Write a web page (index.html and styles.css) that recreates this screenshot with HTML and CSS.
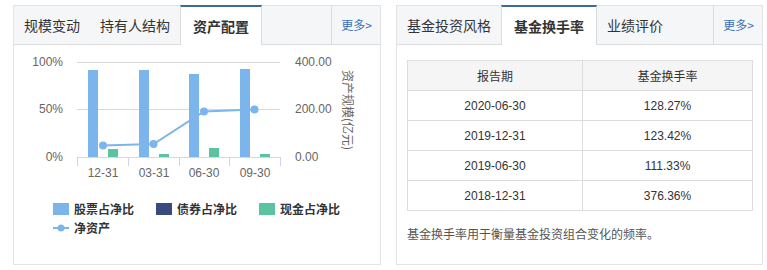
FILE: index.html
```html
<!DOCTYPE html>
<html lang="zh-CN">
<head>
<meta charset="utf-8">
<title>基金</title>
<link rel="stylesheet" href="styles.css">
</head>
<body>
<div class="page">
  <section class="panel panel-left">
    <div class="tabs">
      <div class="tab">规模变动</div>
      <div class="tab">持有人结构</div>
      <div class="tab active">资产配置</div>
      <div class="tab-fill"></div>
      <a class="more">更多&gt;</a>
    </div>
    <div class="chart-body">
      <svg class="chart" width="366" height="146" viewBox="0 0 366 146">
        <g class="grid">
          <line x1="63" y1="17.5" x2="266" y2="17.5"/>
          <line x1="63" y1="64.5" x2="266" y2="64.5"/>
          <line x1="63" y1="112.5" x2="266" y2="112.5"/>
        </g>
        <g class="ticks">
          <line x1="63.5" y1="112" x2="63.5" y2="121"/>
          <line x1="114.5" y1="112" x2="114.5" y2="121"/>
          <line x1="165.5" y1="112" x2="165.5" y2="121"/>
          <line x1="215.5" y1="112" x2="215.5" y2="121"/>
          <line x1="266.5" y1="112" x2="266.5" y2="121"/>
        </g>
        <g class="ylab">
          <text x="49" y="21">100%</text>
          <text x="49" y="68">50%</text>
          <text x="49" y="116">0%</text>
        </g>
        <g class="ylab-r">
          <text x="281" y="21">400.00</text>
          <text x="281" y="68">200.00</text>
          <text x="281" y="116">0.00</text>
        </g>
        <text class="ytitle" transform="translate(329 65) rotate(90)">资产规模(亿元)</text>
        <g class="xlab">
          <text x="89" y="132">12-31</text>
          <text x="140" y="132">03-31</text>
          <text x="190" y="132">06-30</text>
          <text x="241" y="132">09-30</text>
        </g>
        <g class="bars-stock">
          <rect x="74" y="25" width="10" height="87"/>
          <rect x="125" y="25" width="10" height="87"/>
          <rect x="175" y="29" width="10" height="83"/>
          <rect x="226" y="24" width="10" height="88"/>
        </g>
        <g class="bars-cash">
          <rect x="94" y="104" width="10" height="8"/>
          <rect x="145" y="109" width="10" height="3"/>
          <rect x="195" y="103" width="10" height="9"/>
          <rect x="246" y="109" width="10" height="3"/>
        </g>
        <polyline class="nav-line" points="89,100.5 139.5,99 190,66.5 240.5,64.5"/>
        <g class="nav-dot">
          <circle cx="89" cy="100.5" r="4"/>
          <circle cx="139.5" cy="99" r="4"/>
          <circle cx="190" cy="66.5" r="4"/>
          <circle cx="240.5" cy="64.5" r="4"/>
        </g>
      </svg>
      <div class="legend">
        <div class="legend-row">
          <span class="lg-item"><i class="sw sw-stock"></i>股票占净比</span>
          <span class="lg-item"><i class="sw sw-bond"></i>债券占净比</span>
          <span class="lg-item"><i class="sw sw-cash"></i>现金占净比</span>
        </div>
        <div class="legend-row">
          <span class="lg-item"><svg class="lg-line" width="16" height="10" viewBox="0 0 16 10"><line x1="0" y1="5" x2="16" y2="5"/><circle cx="8" cy="5" r="3.5"/></svg>净资产</span>
        </div>
      </div>
    </div>
  </section>

  <section class="panel panel-right">
    <div class="tabs">
      <div class="tab">基金投资风格</div>
      <div class="tab active">基金换手率</div>
      <div class="tab">业绩评价</div>
      <div class="tab-fill"></div>
      <a class="more">更多&gt;</a>
    </div>
    <div class="table-body">
      <table class="turnover">
        <thead>
          <tr><th class="c1">报告期</th><th>基金换手率</th></tr>
        </thead>
        <tbody>
          <tr><td>2020-06-30</td><td>128.27%</td></tr>
          <tr><td>2019-12-31</td><td>123.42%</td></tr>
          <tr><td>2019-06-30</td><td>111.33%</td></tr>
          <tr><td>2018-12-31</td><td>376.36%</td></tr>
        </tbody>
      </table>
      <p class="note">基金换手率用于衡量基金投资组合变化的频率。</p>
    </div>
  </section>
</div>
</body>
</html>
```

FILE: styles.css
```css
* { box-sizing: border-box; }
html, body { margin: 0; padding: 0; background: #fff; }
body {
  font-family: "Liberation Sans", "Noto Sans CJK SC", sans-serif;
  color: #333;
}
.page {
  display: flex;
  gap: 15px;
  padding: 5px 0 0 13px;
}
.panel {
  border: 1px solid #e3e3e3;
  height: 260px;
  display: flex;
  flex-direction: column;
}
.panel-left { width: 368px; }
.panel-right { width: 367px; }

.tabs {
  display: flex;
  height: 39px;
  background: #f5f6f8;
  border-bottom: 1px solid #dcdcdc;
  flex: none;
}
.tab {
  font-family: "Noto Sans CJK SC", sans-serif;
  font-size: 14px;
  line-height: 38px;
  padding: 0 10px;
  color: #333;
  white-space: nowrap;
}
.tab.active {
  background: #fff;
  font-weight: bold;
  border-top: 2px solid #3a6c9a;
  border-left: 1px solid #dcdcdc;
  border-right: 1px solid #dcdcdc;
  margin-top: -1px;
  margin-bottom: -1px;
  line-height: 38px;
  padding: 0 12px;
}
.tab-fill { flex: 1; }
.more {
  font-family: "Noto Sans CJK SC", sans-serif;
  font-size: 12px;
  color: #3a70b5;
  line-height: 38px;
  border-left: 1px solid #dcdcdc;
  padding: 0 8px 0 9px;
}

.chart-body { flex: 1; }
.chart { display: block; }
.grid line { stroke: #d8d8d8; stroke-width: 1; }
.ticks line { stroke: #ccd6eb; stroke-width: 1; }
.ylab text {
  font-size: 12px; fill: #666; text-anchor: end;
  font-family: "Liberation Sans", "Noto Sans CJK SC", sans-serif;
}
.ylab-r text {
  font-size: 12px; fill: #666;
  font-family: "Liberation Sans", "Noto Sans CJK SC", sans-serif;
}
.ytitle {
  font-family: "Noto Sans CJK SC", sans-serif;
  font-size: 12px; fill: #666; text-anchor: middle;
}
.xlab text {
  font-size: 12px; fill: #666; text-anchor: middle;
  font-family: "Liberation Sans", "Noto Sans CJK SC", sans-serif;
}
.bars-stock rect { fill: #7cb5ec; }
.bars-cash rect { fill: #5cc3a0; }
.nav-line { fill: none; stroke: #7cb5ec; stroke-width: 2; }
.nav-dot circle { fill: #7cb5ec; }

.legend {
  padding-left: 39px;
  margin-top: 8px;
}
.legend-row {
  display: flex;
  height: 19px;
  align-items: center;
}
.lg-item {
  display: flex;
  align-items: center;
  font-family: "Noto Sans CJK SC", sans-serif;
  font-size: 12px;
  font-weight: bold;
  color: #333;
  width: 103px;
  white-space: nowrap;
}
.sw {
  display: inline-block;
  width: 16px;
  height: 12px;
  margin-right: 5px;
}
.sw-stock { background: #7cb5ec; }
.sw-bond { background: #3a4a7c; }
.sw-cash { background: #5cc3a0; }
.lg-line { margin-right: 5px; display: block; }
.lg-line line { stroke: #7cb5ec; stroke-width: 2; }
.lg-line circle { fill: #7cb5ec; }

.table-body {
  padding: 15px 10px 0 10px;
}
.turnover {
  width: 346px;
  border-collapse: collapse;
  font-size: 12px;
  color: #333;
  table-layout: fixed;
}
.turnover th, .turnover td {
  border: 1px solid #dcdcdc;
  height: 30px;
  padding: 0;
  text-align: center;
  font-weight: normal;
}
.turnover th {
  background: #f5f5f5;
  font-family: "Noto Sans CJK SC", sans-serif;
}
.turnover th.c1 { width: 175px; }
.note {
  margin: 15px 0 0 0;
  font-family: "Noto Sans CJK SC", sans-serif;
  font-size: 12px;
  color: #555;
  line-height: 16px;
}
```
